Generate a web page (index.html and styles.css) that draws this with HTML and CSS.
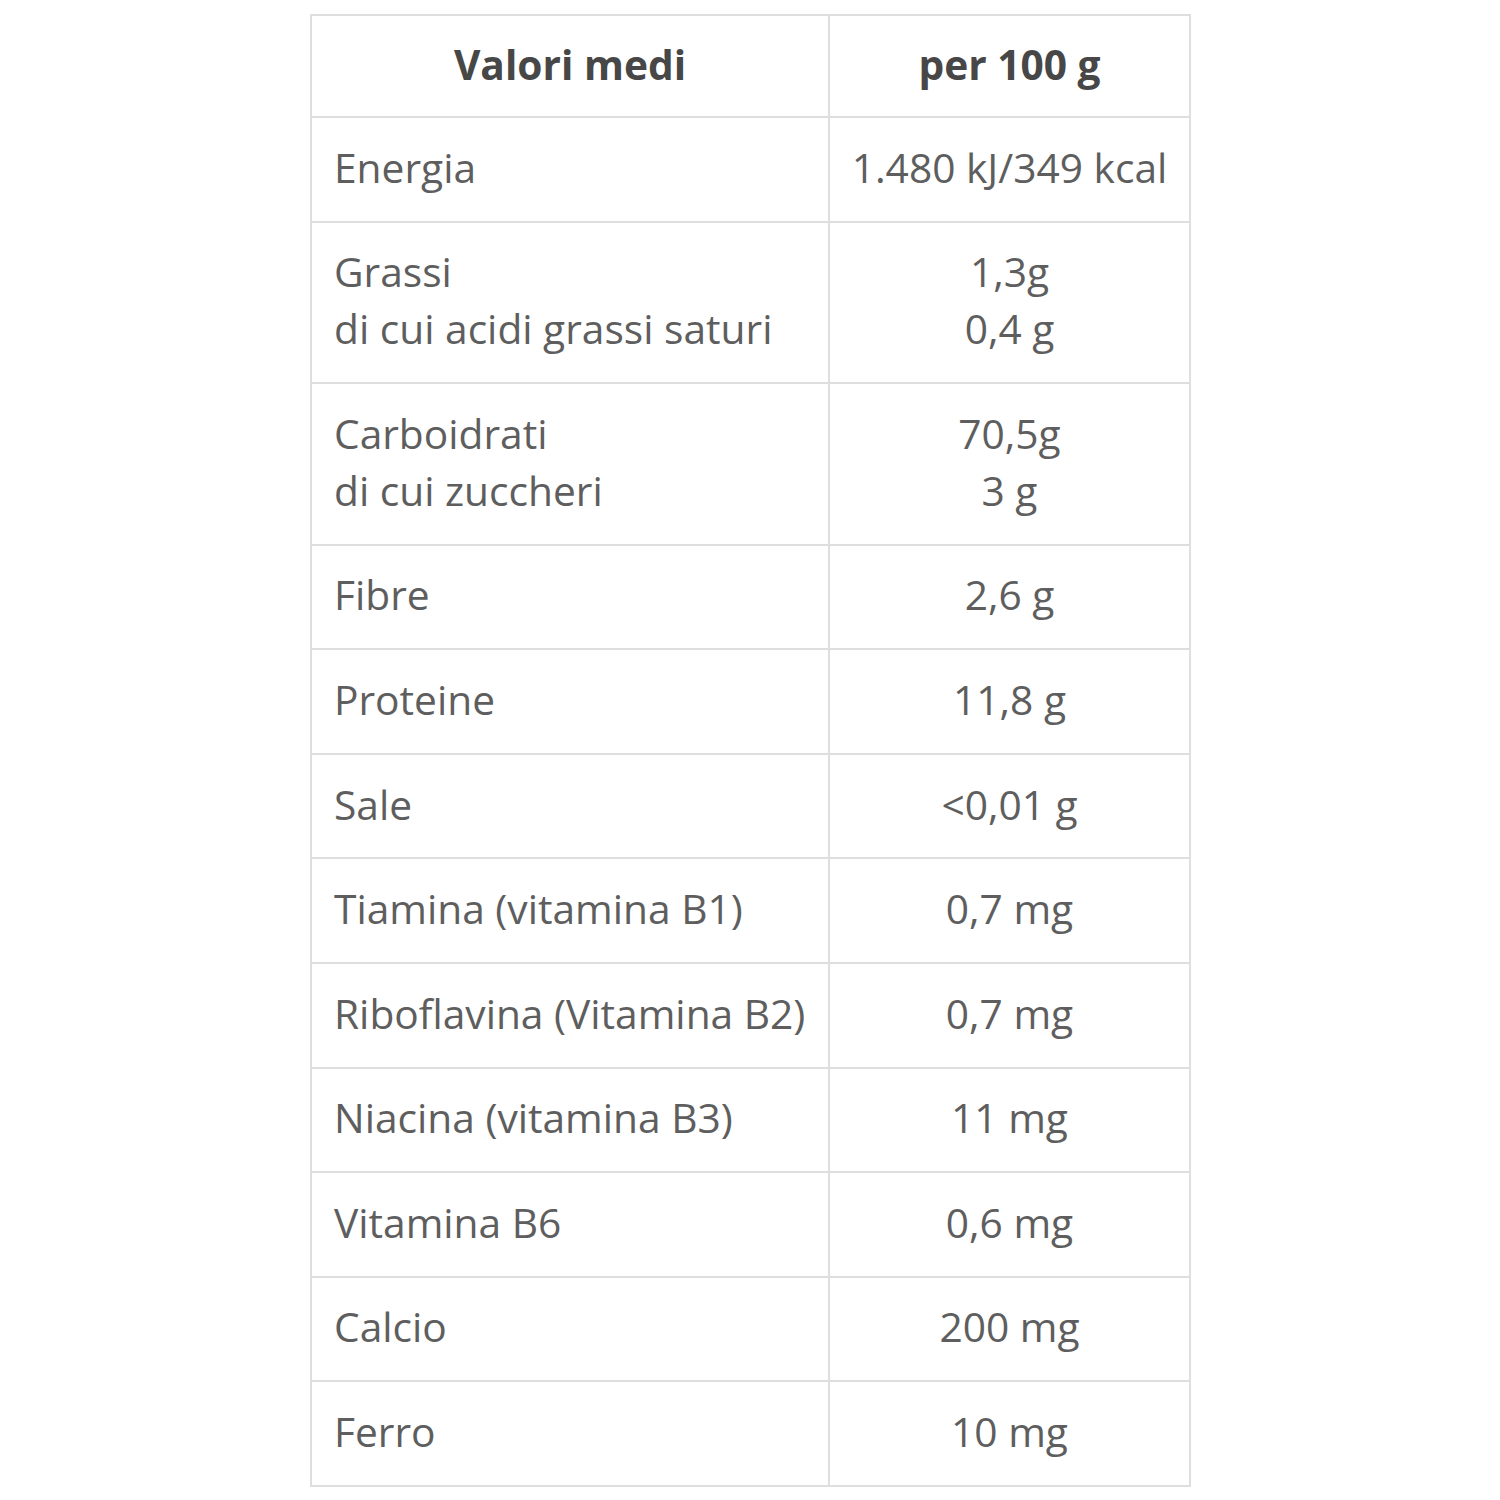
FILE: index.html
```html
<!DOCTYPE html>
<html lang="it">
<head>
<meta charset="utf-8">
<title>Valori nutrizionali</title>
<link rel="stylesheet" href="styles.css">
</head>
<body>
<table class="nutri">
  <colgroup><col class="c1"><col class="c2"></colgroup>
  <thead>
    <tr><th>Valori medi</th><th>per 100 g</th></tr>
  </thead>
  <tbody>
    <tr><td>Energia</td><td class="v">1.480 kJ/349 kcal</td></tr>
    <tr><td>Grassi<br>di cui acidi grassi saturi</td><td class="v">1,3g<br>0,4 g</td></tr>
    <tr><td>Carboidrati<br>di cui zuccheri</td><td class="v">70,5g<br>3 g</td></tr>
    <tr><td>Fibre</td><td class="v">2,6 g</td></tr>
    <tr><td>Proteine</td><td class="v">11,8 g</td></tr>
    <tr><td>Sale</td><td class="v">&lt;0,01 g</td></tr>
    <tr><td>Tiamina (vitamina B1)</td><td class="v">0,7 mg</td></tr>
    <tr><td>Riboflavina (Vitamina B2)</td><td class="v">0,7 mg</td></tr>
    <tr><td>Niacina (vitamina B3)</td><td class="v">11 mg</td></tr>
    <tr><td>Vitamina B6</td><td class="v">0,6 mg</td></tr>
    <tr><td>Calcio</td><td class="v">200 mg</td></tr>
    <tr><td>Ferro</td><td class="v">10 mg</td></tr>
  </tbody>
</table>
</body>
</html>
```
FILE: styles.css
```css
html, body {
  margin: 0;
  padding: 0;
  background: #ffffff;
}
body {
  padding: 14px 0 0 310px;
  font-family: "Open Sans", "Noto Sans", sans-serif;
}
.nutri {
  border-collapse: collapse;
  table-layout: fixed;
  width: 879px;
  font-size: 40.7px;
  line-height: 57px;
  color: #5e5e5e;
}
.c1 { width: 518px; }
.c2 { width: 361px; }
.nutri th,
.nutri td {
  border: 2px solid #dedede;
  padding: 20.7px 22px 24.9px;
  vertical-align: middle;
}
.nutri th {
  padding-top: 19.5px;
  padding-bottom: 23.5px;
  font-weight: 700;
  color: #474747;
  text-align: center;
}
.nutri td {
  text-align: left;
  font-weight: 400;
}
.nutri td.v {
  text-align: center;
  padding-left: 4px;
  padding-right: 4px;
}
```
